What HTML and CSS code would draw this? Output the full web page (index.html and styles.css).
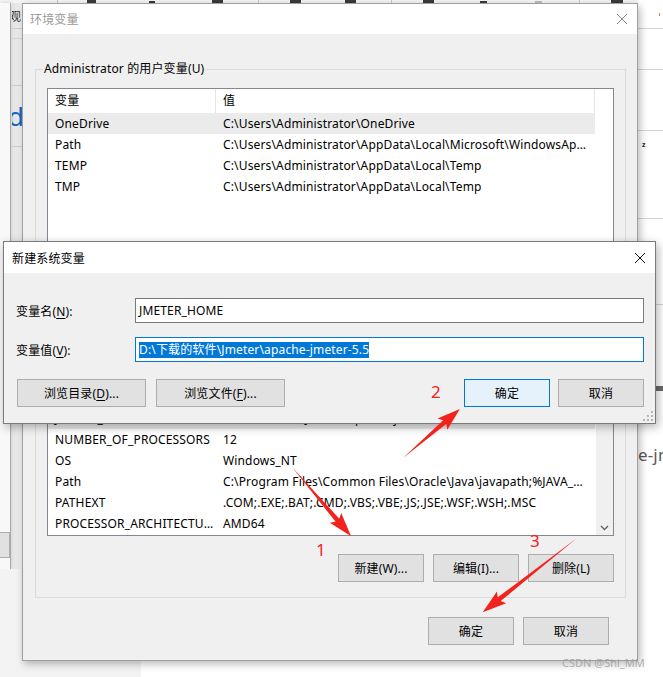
FILE: index.html
```html
<!DOCTYPE html>
<html lang="zh-CN">
<head>
<meta charset="utf-8">
<title>环境变量</title>
<link rel="stylesheet" href="styles.css">
</head>
<body>
<div class="desk-top"></div>
<div class="desk-left"><div class="frag-btn"></div></div>
<div class="desk-strip"><span class="strip-cjk">观步</span><span class="strip-d">d</span></div>
<div class="desk-bottom"></div>
<div class="desk-right"><span class="r-z">z</span><span class="r-bar"></span><span class="r-text">e-jmeter</span></div>

<div class="env-window">
  <div class="titlebar inactive">
    <span class="title">环境变量</span>
    <svg class="close" width="12" height="12" viewBox="0 0 12 12"><path d="M1 1L11 11M11 1L1 11" stroke="#8c8c8c" stroke-width="1"/></svg>
  </div>
  <div class="win-body">
    <div class="group group-user">
      <span class="group-label">Administrator 的用户变量(U)</span>
      <div class="listview user-list">
        <div class="lv-header"><span class="c1">变量</span><span class="c2">值</span></div>
        <div class="lv-row sel"><span class="c1">OneDrive</span><span class="c2">C:\Users\Administrator\OneDrive</span></div>
        <div class="lv-row"><span class="c1">Path</span><span class="c2">C:\Users\Administrator\AppData\Local\Microsoft\WindowsApps;C:\Users\Administrator\AppData\Local\Programs</span></div>
        <div class="lv-row"><span class="c1">TEMP</span><span class="c2">C:\Users\Administrator\AppData\Local\Temp</span></div>
        <div class="lv-row"><span class="c1">TMP</span><span class="c2">C:\Users\Administrator\AppData\Local\Temp</span></div>
      </div>
      <div class="btn-row">
        <span class="btn">新建(N)...</span><span class="btn">编辑(E)...</span><span class="btn">删除(D)</span>
      </div>
    </div>
    <div class="group group-sys">
      <span class="group-label">系统变量(S)</span>
      <div class="listview sys-list">
        <div class="lv-rows">
          <div class="lv-row sel"><span class="c1">JMETER_HOME</span><span class="c2">D:\下载的软件\Jmeter\apache-jmeter-5.5</span></div>
          <div class="lv-row"><span class="c1">NUMBER_OF_PROCESSORS</span><span class="c2">12</span></div>
          <div class="lv-row"><span class="c1">OS</span><span class="c2">Windows_NT</span></div>
          <div class="lv-row"><span class="c1">Path</span><span class="c2">C:\Program Files\Common Files\Oracle\Java\javapath;%JAVA_HOME%\bin;</span></div>
          <div class="lv-row"><span class="c1">PATHEXT</span><span class="c2">.COM;.EXE;.BAT;.CMD;.VBS;.VBE;.JS;.JSE;.WSF;.WSH;.MSC</span></div>
          <div class="lv-row"><span class="c1">PROCESSOR_ARCHITECTURE</span><span class="c2">AMD64</span></div>
        </div>
        <div class="vscroll"><div class="thumb"></div><svg class="down" width="9" height="6" viewBox="0 0 9 6"><path d="M1 1L4.5 4.5L8 1" fill="none" stroke="#606060" stroke-width="1.3"/></svg></div>
      </div>
      <div class="btn-row">
        <span class="btn">新建(W)...</span><span class="btn">编辑(I)...</span><span class="btn">删除(L)</span>
      </div>
    </div>
    <div class="btn-row bottom-row">
      <span class="btn">确定</span><span class="btn">取消</span>
    </div>
  </div>
</div>

<div class="dialog">
  <div class="titlebar">
    <span class="title">新建系统变量</span>
    <svg class="close" width="12" height="12" viewBox="0 0 12 12"><path d="M1 1L11 11M11 1L1 11" stroke="#111" stroke-width="1"/></svg>
  </div>
  <div class="dlg-body">
    <div class="field">
      <span class="flabel">变量名(<u>N</u>):</span>
      <div class="input">JMETER_HOME</div>
    </div>
    <div class="field">
      <span class="flabel">变量值(<u>V</u>):</span>
      <div class="input focus"><span class="selected">D:\下载的软件\Jmeter\apache-jmeter-5.5</span></div>
    </div>
    <div class="dlg-buttons">
      <span class="btn wide">浏览目录(<u>D</u>)...</span>
      <span class="btn wide">浏览文件(<u>F</u>)...</span>
      <span class="spacer"></span>
      <span class="btn default">确定</span>
      <span class="btn">取消</span>
    </div>
    <svg class="grip" width="10" height="10" viewBox="0 0 10 10"><g fill="#b5b5b5"><rect x="8" y="0" width="2" height="2"/><rect x="4" y="4" width="2" height="2"/><rect x="8" y="4" width="2" height="2"/><rect x="0" y="8" width="2" height="2"/><rect x="4" y="8" width="2" height="2"/><rect x="8" y="8" width="2" height="2"/></g></svg>
  </div>
</div>

<svg class="arrows" width="663" height="677" viewBox="0 0 663 677">
  <g fill="#f2231d">
    <polygon transform="translate(292 467) rotate(49.5)" points="0,0 70,-2.4 67,-7.5 91,0 67,7.5 70,2.4"/>
    <polygon transform="translate(403 458) rotate(-40.7)" points="0,0 55,-2.4 52,-7.5 75,0 52,7.5 55,2.4"/>
    <polygon transform="translate(577 538) rotate(141.8)" points="0,0 99,-2.4 96,-7.5 120,0 96,7.5 99,2.4"/>
  </g>
</svg>
<span class="note n1">1</span>
<span class="note n2">2</span>
<span class="note n3">3</span>
<span class="watermark">CSDN @Shi_MM</span>
</body>
</html>
```
FILE: styles.css
```css
html, body { margin: 0; padding: 0; }
body {
  width: 663px; height: 677px; position: relative; overflow: hidden;
  background: #fff; color: #000;
  font-family: "Noto Sans", "Noto Sans CJK SC", sans-serif;
  font-size: 12px;
  letter-spacing: 0.15px;
}

/* ---------- desktop fragments ---------- */
.desk-top {
  position: absolute; left: 0; top: 0; width: 663px; height: 3px;
  background:
    linear-gradient(#3a3a3a,#3a3a3a) 87px 0/9px 3px no-repeat,
    linear-gradient(#3a3a3a,#3a3a3a) 149px 1px/6px 2px no-repeat,
    linear-gradient(#3a3a3a,#3a3a3a) 212px 0/11px 3px no-repeat,
    linear-gradient(#3a3a3a,#3a3a3a) 290px 0/11px 3px no-repeat,
    linear-gradient(#3a3a3a,#3a3a3a) 345px 0/11px 3px no-repeat,
    linear-gradient(#3a3a3a,#3a3a3a) 423px 0/11px 3px no-repeat,
    linear-gradient(#3a3a3a,#3a3a3a) 480px 1px/7px 2px no-repeat,
    linear-gradient(#bdbdbd,#bdbdbd) 535px 1px/7px 2px no-repeat,
    linear-gradient(#3a3a3a,#3a3a3a) 611px 0/12px 3px no-repeat,
    linear-gradient(#c9c9c9,#c9c9c9) 57px 0/1px 3px no-repeat,
    linear-gradient(#c9c9c9,#c9c9c9) 258px 0/1px 3px no-repeat,
    linear-gradient(#c9c9c9,#c9c9c9) 391px 0/1px 3px no-repeat,
    linear-gradient(#c9c9c9,#c9c9c9) 579px 0/1px 3px no-repeat,
    #f4f4f4;
}
.desk-left {
  position: absolute; left: 0; top: 3px; width: 11px; height: 566px;
  background: #f8f8f8; border-right: 1px solid #a9a9a9;
  box-shadow: 1px 1px 5px rgba(0,0,0,.25);
  padding-top: 529px; box-sizing: border-box;
}
.frag-btn { width: 10px; height: 26px; background: #e1e1e1; border: 1px solid #adadad; border-left: 0; box-sizing: border-box; }
.desk-strip {
  position: absolute; left: 12px; top: 3px; width: 10px; height: 566px; overflow: hidden;
  background:
    linear-gradient(#cfcfcf,#cfcfcf) 0 25px/10px 1px no-repeat,
    linear-gradient(#d6d6d6,#d6d6d6) 0 35px/10px 1px no-repeat,
    linear-gradient(#cfcfcf,#cfcfcf) 0 82px/10px 1px no-repeat,
    linear-gradient(#cfcfcf,#cfcfcf) 0 143px/10px 1px no-repeat,
    linear-gradient(90deg, #e2e2e2, #f1f1f1);
}
.strip-cjk { position: absolute; left: -3px; top: 4px; font-size: 12px; color: #333; white-space: nowrap; font-family: "Noto Sans CJK SC", sans-serif; }
.strip-d { position: absolute; left: -4px; top: 98px; font-size: 26px; color: #1565c0; line-height: 30px; }
.desk-bottom { position: absolute; left: 0; top: 569px; width: 141px; height: 108px; background: #f3f3f3; }
.desk-right {
  position: absolute; left: 638px; top: 0; width: 25px; height: 677px;
  background:
    linear-gradient(#d4d4d4,#d4d4d4) 0 28px/25px 1px no-repeat,
    linear-gradient(#d4d4d4,#d4d4d4) 0 69px/25px 1px no-repeat,
    linear-gradient(#d4d4d4,#d4d4d4) 0 130px/25px 1px no-repeat,
    linear-gradient(#d4d4d4,#d4d4d4) 0 218px/25px 1px no-repeat,
    linear-gradient(#d4d4d4,#d4d4d4) 0 304px/25px 1px no-repeat,
    linear-gradient(#e07a4a,#e07a4a) 21px 13px/1px 3px no-repeat,
    #fff;
}
.r-z { position: absolute; left: 4px; top: 141px; font-size: 7px; line-height: 8px; color: #333; font-weight: bold; }
.r-bar { position: absolute; left: 17px; top: 386px; width: 8px; height: 5px; background: #6a6a6a; }
.r-text { position: absolute; left: 0; top: 443px; font-size: 17px; color: #5a5a5a; white-space: nowrap; }

/* ---------- common window pieces ---------- */
.titlebar {
  display: flex; align-items: center; justify-content: space-between;
  background: #fff; box-sizing: border-box;
}
.title { white-space: nowrap; }
.btn {
  display: flex; align-items: center; justify-content: center;
  width: 86px; height: 28px; box-sizing: border-box;
  background: #e1e1e1; border: 1px solid #adadad; color: #000;
  white-space: nowrap;
}
.btn u, .flabel u { text-decoration: underline; text-underline-offset: 2px; }

/* ---------- environment variables window ---------- */
.env-window {
  position: absolute; left: 22px; top: 3px; width: 616px; height: 658px;
  box-sizing: border-box; border: 1px solid #9f9f9f;
  background: #f0f0f0;
  box-shadow: 2px 3px 8px rgba(0,0,0,.28);
  display: flex; flex-direction: column;
}
.env-window .titlebar { height: 30px; padding: 0 9px 0 7px; }
.titlebar.inactive .title { color: #9a9a9a; }
.win-body { flex: 1; display: flex; flex-direction: column; padding: 35px 11px 15px 12px; box-sizing: border-box; min-height: 0; }
.group {
  position: relative; border: 1px solid #dadada; box-sizing: border-box;
  padding: 18px 11px 15px 11px; display: flex; flex-direction: column;
}
.group-label {
  position: absolute; left: 7px; top: -9px; background: #f0f0f0; padding: 0 1px;
  line-height: 16px; white-space: nowrap;
}
.group-user { height: 265px; }
.group-sys { flex: 1; margin-top: 12px; min-height: 0; }
.listview {
  background: #fff; border: 1px solid #828790; box-sizing: border-box;
  position: relative; overflow: hidden;
}
.user-list { height: 168px; }
.sys-list { flex: 1; display: flex; min-height: 0; }
.lv-header, .lv-row { display: flex; width: 547px; }
.lv-header { height: 24px; align-items: center; }
.lv-header .c1 { border-right: 1px solid #e5e5e5; height: 24px; line-height: 24px; box-sizing: border-box; }
.lv-header .c2 { border-right: 1px solid #e5e5e5; height: 24px; line-height: 24px; box-sizing: border-box; }
.lv-row { height: 21px; line-height: 21px; }
.lv-row.sel { background: #ebebeb; }
.c1, .c2 { display: block; overflow: hidden; white-space: nowrap; text-overflow: ellipsis; box-sizing: border-box; }
.c1 { width: 168px; padding: 0 1px 0 7px; }
.c2 { width: 379px; padding: 0 6px 0 7px; }
.lv-rows { width: 548px; display: flex; flex-direction: column; justify-content: flex-end; padding-bottom: 1px; }
.vscroll { width: 17px; background: #f0f0f0; display: flex; flex-direction: column; align-items: center; justify-content: space-between; margin-left: auto; }
.thumb { width: 15px; height: 36px; background: #cdcdcd; }
.down { margin-bottom: 4px; }
.btn-row { display: flex; justify-content: flex-end; gap: 9px; margin-top: 18px; }
.bottom-row { margin-top: 19px; padding-right: 17px; }

/* ---------- new system variable dialog ---------- */
.dialog {
  position: absolute; left: 3px; top: 241px; width: 653px; height: 183px;
  box-sizing: border-box; border: 1px solid #7a7a7a; background: #f0f0f0;
  box-shadow: 2px 3px 9px rgba(0,0,0,.3);
  display: flex; flex-direction: column;
}
.dialog .titlebar { height: 31px; padding: 0 9px 0 8px; }
.dlg-body { position: relative; flex: 1; padding: 25px 11px 0 12px; display: flex; flex-direction: column; }
.field { display: flex; align-items: center; height: 25px; }
.field + .field { margin-top: 14px; }
.flabel { width: 119px; white-space: nowrap; }
.input {
  flex: 1; height: 25px; box-sizing: border-box; border: 1px solid #7a7a7a; background: #fff;
  padding: 0 3px; line-height: 23px; white-space: nowrap;
}
.input.focus { border-color: #0078d7; }
.selected { background: #0078d7; color: #fff; display: inline-block; line-height: 16px; }
.dlg-buttons { display: flex; align-items: center; margin-top: 17px; padding-left: 1px; }
.btn.wide { width: 129px; margin-right: 10px; }
.spacer { flex: 1; }
.btn.default { background: #e5f1fb; border-color: #0078d7; margin-right: 8px; }
.grip { position: absolute; right: 2px; bottom: 2px; }

/* ---------- annotations ---------- */
.arrows { position: absolute; left: 0; top: 0; pointer-events: none; }
.note { position: absolute; color: #f2231d; font-size: 17px; line-height: 20px; font-family: "Noto Sans", sans-serif; letter-spacing: 0; }
.n1 { left: 316px; top: 540px; }
.n2 { left: 431px; top: 382px; }
.n3 { left: 530px; top: 531px; }
.watermark {
  position: absolute; left: 562px; top: 655px; font-size: 11px; color: rgba(150,150,150,.75);
  white-space: nowrap; letter-spacing: 0;
}
```
